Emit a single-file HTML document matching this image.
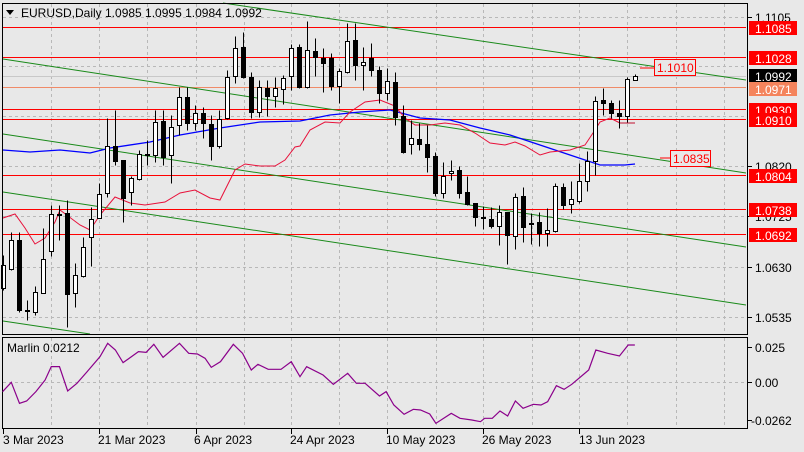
<!DOCTYPE html>
<html><head><meta charset="utf-8"><style>
html,body{margin:0;padding:0;background:#e8e8e8;}
svg{display:block;font-family:"Liberation Sans",sans-serif;}
</style></head><body>
<svg width="804" height="452" viewBox="0 0 804 452" xmlns="http://www.w3.org/2000/svg">
<rect width="804" height="452" fill="#e8e8e8"/>
<g stroke="#b8b8b8" stroke-dasharray="3,3" stroke-width="1" shape-rendering="crispEdges">
<path d="M51.5 4V334M99.5 4V334M147.5 4V334M196.5 4V334M244.5 4V334M291.5 4V334M339.5 4V334M387.5 4V334M436.5 4V334M483.5 4V334M532.5 4V334M579.5 4V334M627.5 4V334M676.5 4V334M724.5 4V334"/>
<path d="M51.5 338V427M99.5 338V427M147.5 338V427M196.5 338V427M244.5 338V427M291.5 338V427M339.5 338V427M387.5 338V427M436.5 338V427M483.5 338V427M532.5 338V427M579.5 338V427M627.5 338V427M676.5 338V427M724.5 338V427"/>
<path d="M3 17.5H746M3 66.5H746M3 116.5H746M3 166.5H746M3 216.5H746M3 267.5H746M3 317.5H746M3 382.5H746"/>
</g>
<g stroke-width="1" fill="none">
<line x1="3" y1="76.5" x2="746" y2="76.5" stroke="#c8c8c8"/>
<line x1="3" y1="87.5" x2="746" y2="87.5" stroke="#f08a68"/>
<g stroke="#ff0000" shape-rendering="crispEdges">
<path d="M3 27.5H746M3 57.5H746M3 109.5H746M3 119.5H746M3 175.5H746M3 209.5H746M3 234.5H746"/>
</g>
<g stroke="#1a8a1a">
<line x1="223" y1="3" x2="746" y2="80"/>
<line x1="3" y1="59" x2="746" y2="173"/>
<line x1="3" y1="134" x2="746" y2="247"/>
<line x1="3" y1="192" x2="746" y2="305"/>
<line x1="3" y1="321" x2="90" y2="334"/>
</g>
<polyline stroke="#0000ff" stroke-width="1.3" points="3,150 30,152 60,150 90,153 110,148 150,142 180,135 220,128 260,122 300,121 330,115 360,112 390,110 420,118 450,120 480,128 510,135 540,145 570,155 600,165 625,165 635,164"/>
<polyline stroke="#e8103a" points="3,218 15,214 25,228 35,244 45,238 55,222 60,210 80,225 90,230 100,215 115,197 130,203 145,205 165,202 180,193 195,190 210,198 220,200 235,170 245,164 260,166 275,166 285,160 295,147 300,146 310,130 325,122 340,123 350,112 365,102 380,100 395,106 405,118 415,125 430,125 445,123 460,125 475,133 490,143 505,145 515,142 525,146 540,155 550,152 570,150 585,145 595,130 600,122 610,118 620,123"/>
<line x1="620" y1="123" x2="635" y2="123" stroke="#c01030"/>
</g>
<g transform="translate(0.5,0.5)" stroke="#000" stroke-width="1" shape-rendering="crispEdges">
<path d="M3 255V290M11 232V270M19 232V312M27 300V320M35 286V315M43 228V293M51 205V256M59 205V240M67 200V327M75 263V307M83 237V277M91 207V266M99 183V218M107 118V197M115 110V165M123 160V222M131 176V205M139 150V180M147 140V165M155 110V162M163 110V165M171 115V183M179 87V135M187 87V130M195 105V130M203 107V138M211 115V160M219 110V148M227 70V119M235 36V83M243 32V78M251 72V118M259 80V117M267 80V116M275 77V107M283 75V104M291 44V90M299 44V88M307 21V88M315 38V76M323 48V92M331 53V90M339 68V103M347 23V73M355 23V80M363 47V90M371 43V76M379 66V103M387 68V100M395 72V125M403 105V153M411 120V154M419 123V150M427 125V172M435 152V196M443 162V198M451 160V180M459 166V198M467 176V205M475 203V226M483 206V229M491 207V228M499 205V245M507 212V264M515 193V249M523 187V242M531 213V244M539 212V246M547 208V246M555 183V232M563 183V209M571 181V213M579 163V203M587 151V191M595 96V175M603 88V115M611 100V118M619 100V128M627 77V122M635 74V80"/>
<g fill="#fff">
<rect x="1" y="265" width="4" height="23"/><rect x="9" y="240" width="4" height="29"/><rect x="33" y="292" width="4" height="20"/><rect x="41" y="259" width="4" height="34"/><rect x="49" y="214" width="4" height="37"/><rect x="73" y="275" width="4" height="18"/><rect x="81" y="247" width="4" height="29"/><rect x="89" y="219" width="4" height="18"/><rect x="97" y="194" width="4" height="24"/><rect x="105" y="146" width="4" height="47"/><rect x="129" y="178" width="4" height="14"/><rect x="137" y="154" width="4" height="25"/><rect x="153" y="122" width="4" height="33"/><rect x="169" y="127" width="4" height="28"/><rect x="177" y="97" width="4" height="28"/><rect x="193" y="113" width="4" height="10"/><rect x="217" y="119" width="4" height="27"/><rect x="225" y="77" width="4" height="41"/><rect x="233" y="48" width="4" height="28"/><rect x="257" y="87" width="4" height="25"/><rect x="273" y="88" width="4" height="8"/><rect x="281" y="78" width="4" height="11"/><rect x="289" y="48" width="4" height="28"/><rect x="305" y="50" width="4" height="37"/><rect x="337" y="71" width="4" height="15"/><rect x="345" y="41" width="4" height="31"/><rect x="361" y="62" width="4" height="3"/><rect x="385" y="81" width="4" height="12"/><rect x="409" y="138" width="4" height="6"/><rect x="441" y="176" width="4" height="17"/><rect x="449" y="171" width="4" height="2"/><rect x="497" y="212" width="4" height="14"/><rect x="513" y="197" width="4" height="39"/><rect x="545" y="230" width="4" height="3"/><rect x="553" y="186" width="4" height="45"/><rect x="569" y="199" width="4" height="5"/><rect x="577" y="181" width="4" height="20"/><rect x="585" y="161" width="4" height="20"/><rect x="593" y="101" width="4" height="60"/><rect x="625" y="79" width="4" height="37"/><rect x="633" y="76" width="4" height="4"/>
</g>
<g fill="#000">
<rect x="17" y="240" width="4" height="70"/><rect x="25" y="310" width="4" height="1"/><rect x="57" y="214" width="4" height="1"/><rect x="65" y="213" width="4" height="81"/><rect x="113" y="146" width="4" height="15"/><rect x="121" y="160" width="4" height="38"/><rect x="145" y="154" width="4" height="1"/><rect x="161" y="121" width="4" height="36"/><rect x="185" y="97" width="4" height="26"/><rect x="201" y="113" width="4" height="10"/><rect x="209" y="124" width="4" height="22"/><rect x="241" y="47" width="4" height="30"/><rect x="249" y="77" width="4" height="35"/><rect x="265" y="88" width="4" height="8"/><rect x="297" y="47" width="4" height="40"/><rect x="313" y="51" width="4" height="6"/><rect x="321" y="58" width="4" height="5"/><rect x="329" y="58" width="4" height="28"/><rect x="353" y="40" width="4" height="25"/><rect x="369" y="58" width="4" height="12"/><rect x="377" y="70" width="4" height="23"/><rect x="393" y="82" width="4" height="35"/><rect x="401" y="116" width="4" height="36"/><rect x="417" y="139" width="4" height="5"/><rect x="425" y="144" width="4" height="13"/><rect x="433" y="156" width="4" height="37"/><rect x="457" y="170" width="4" height="23"/><rect x="465" y="192" width="4" height="12"/><rect x="473" y="203" width="4" height="14"/><rect x="481" y="217" width="4" height="1"/><rect x="489" y="219" width="4" height="7"/><rect x="505" y="212" width="4" height="23"/><rect x="521" y="196" width="4" height="31"/><rect x="529" y="223" width="4" height="1"/><rect x="537" y="222" width="4" height="11"/><rect x="561" y="187" width="4" height="18"/><rect x="601" y="100" width="4" height="3"/><rect x="609" y="103" width="4" height="10"/><rect x="617" y="113" width="4" height="3"/>
</g>
</g>
<!-- frames -->
<g fill="none" stroke="#000" shape-rendering="crispEdges">
<rect x="2.5" y="3.5" width="745" height="331"/>
<rect x="2.5" y="337.5" width="745" height="91"/>
</g>
<!-- header -->
<path d="M6 10H14L10 15Z" fill="#000"/>
<text x="21" y="17" font-size="12" fill="#000">EURUSD,Daily  1.0985 1.0995 1.0984 1.0992</text>
<!-- label boxes -->
<g stroke="#ff0000" fill="none"><line x1="640" y1="68" x2="654" y2="68"/><line x1="660" y1="158" x2="670" y2="158"/></g>
<rect x="654.5" y="59.5" width="41" height="16" fill="#e8e8e8" stroke="#ff0000"/>
<text x="657" y="72" font-size="12" fill="#ff0000">1.1010</text>
<rect x="670.5" y="150.5" width="40" height="16" fill="#e8e8e8" stroke="#ff0000"/>
<text x="673" y="163" font-size="12" fill="#ff0000">1.0835</text>
<!-- axis labels -->
<g font-size="12" fill="#000">
<g stroke="#000" shape-rendering="crispEdges"><path d="M747 17.5H752M747 166.5H752M747 216.5H752M747 267.5H752M747 317.5H752M747 347.5H752M747 382.5H752M747 420.5H752"/></g>
<text x="755" y="22">1.1105</text>
<text x="755" y="171">1.0820</text>
<text x="755" y="221">1.0725</text>
<text x="755" y="272">1.0630</text>
<text x="755" y="322">1.0535</text>
<text x="755" y="352">0.025</text>
<text x="755" y="387">0.00</text>
<text x="751" y="425">-0.0262</text>
</g>
<g font-size="12" fill="#fff">
<rect x="749" y="21" width="48" height="14" fill="#ff0000"/><text x="755" y="33">1.1085</text>
<rect x="749" y="51" width="48" height="14" fill="#ff0000"/><text x="755" y="63">1.1028</text>
<rect x="749" y="103" width="48" height="14" fill="#ff0000"/><text x="755" y="115">1.0930</text>
<rect x="749" y="113" width="48" height="14" fill="#ff0000"/><text x="755" y="125">1.0910</text>
<rect x="749" y="69" width="48" height="14" fill="#000"/><text x="755" y="81">1.0992</text>
<rect x="749" y="82" width="48" height="14" fill="#f4845c"/><text x="755" y="94">1.0971</text>
<rect x="749" y="169" width="48" height="14" fill="#ff0000"/><text x="755" y="181">1.0804</text>
<rect x="749" y="203" width="48" height="14" fill="#ff0000"/><text x="755" y="215">1.0738</text>
<rect x="749" y="228" width="48" height="14" fill="#ff0000"/><text x="755" y="240">1.0692</text>
</g>
<!-- indicator -->
<text x="7" y="352" font-size="12" fill="#000">Marlin 0.0212</text>
<g transform="translate(0,320) scale(0.5128,0.3333)">
<polyline fill="none" stroke="#8b008b" stroke-width="1.2" vector-effect="non-scaling-stroke" points="5,215 22,187 38,250 52,243 70,215 88,180 100,140 116,140 132,213 150,190 170,155 195,110 210,70 225,90 240,128 270,95 285,97 300,73 318,112 350,70 368,100 385,102 400,115 412,142 430,125 455,73 473,100 490,150 503,133 523,148 548,148 568,125 585,170 598,140 630,165 650,193 678,160 695,190 712,190 740,228 753,215 768,255 788,283 806,268 820,270 838,282 850,310 880,280 897,295 920,300 937,305 945,295 960,295 975,273 990,288 1005,243 1020,265 1040,253 1055,255 1068,245 1085,197 1100,208 1115,193 1148,150 1162,90 1185,100 1208,108 1225,75 1238,75"/>
</g>
<!-- time axis -->
<g stroke="#000" shape-rendering="crispEdges"><path d="M3.5 429V434M99.5 429V434M196.5 429V434M291.5 429V434M387.5 429V434M483.5 429V434M579.5 429V434"/></g>
<g font-size="12" fill="#000">
<text x="3" y="444">3 Mar 2023</text>
<text x="98" y="444">21 Mar 2023</text>
<text x="194" y="444">6 Apr 2023</text>
<text x="290" y="444">24 Apr 2023</text>
<text x="386" y="444">10 May 2023</text>
<text x="482" y="444">26 May 2023</text>
<text x="579" y="444">13 Jun 2023</text>
</g>
</svg>
</body></html>
